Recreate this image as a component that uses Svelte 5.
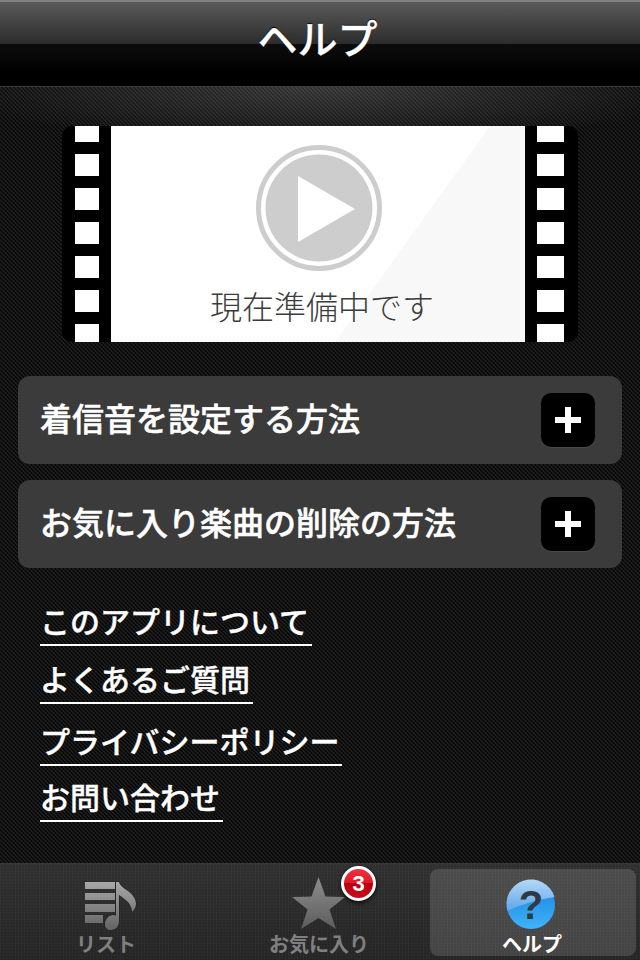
<script>
	const holes = [0, 1, 2, 3, 4, 5, 6];
	const rows = ["着信音を設定する方法", "お気に入り楽曲の削除の方法"];
	const links = [
		{ label: "このアプリについて", cls: "l1" },
		{ label: "よくあるご質問", cls: "l2" },
		{ label: "プライバシーポリシー", cls: "l3" },
		{ label: "お問い合わせ", cls: "l4" },
	];
</script>

<div class="page">
	<header class="top">
		<h1>ヘルプ</h1>
	</header>

	<main class="content">
		<div class="film">
			<div class="strip left">
				{#each holes as h}<span class="hole"></span>{/each}
			</div>
			<div class="screen">
				<svg class="play" width="126" height="126" viewBox="0 0 126 126">
					<circle cx="63" cy="63" r="60.5" fill="none" stroke="#cdcdcd" stroke-width="5" />
					<circle cx="63" cy="63" r="53.5" fill="#cdcdcd" />
					<polygon points="42,31 42,97 99,64" fill="#fff" />
				</svg>
				<p>現在準備中です</p>
			</div>
			<div class="strip right">
				{#each holes as h}<span class="hole"></span>{/each}
			</div>
		</div>

		<div class="rows">
			{#each rows as row}
				<div class="row">
					<span>{row}</span>
					<button class="plus" aria-label="開く">
						<svg width="26" height="26" viewBox="0 0 26 26">
							<path d="M10 0h6v10h10v6H16v10h-6V16H0v-6h10z" fill="#fff" />
						</svg>
					</button>
				</div>
			{/each}
		</div>

		<nav class="links">
			{#each links as link}
				<a href="#top" class={link.cls}>{link.label}</a>
			{/each}
		</nav>
	</main>

	<footer class="tabs">
		<div class="tab">
			<svg class="icon" width="60" height="52" viewBox="0 0 60 52">
				<defs>
					<linearGradient id="g-list" gradientUnits="userSpaceOnUse" x1="0" y1="2" x2="0" y2="48">
						<stop offset="0" stop-color="#a8a8a8" />
						<stop offset="1" stop-color="#666" />
					</linearGradient>
				</defs>
				<path fill="url(#g-list)" d="M9 2h30v7H9zM9 13h30v7H9zM9 24h30v8H9zM9 35h18v8H9z" />
				<path
					fill="url(#g-list)"
					stroke="#1e1e1e"
					stroke-width="1"
					paint-order="stroke"
					d="M40 2h3c1 4 5 6 9 9 5 4 8 8 8 13 0 3-2 6-4 8 0-3-1-6-4-10-3-3-6-5-9-7v26c0 5-3 9-8 9-4 0-6-2-6-6 0-5 4-9 8-9 1.500 0 2.500.3 3 .8z"
				/>
			</svg>
			<span>リスト</span>
		</div>
		<div class="tab">
			<div class="star-wrap">
				<svg class="icon" width="60" height="52" viewBox="0 0 60 52">
					<defs>
						<linearGradient id="g-star" x1="0" y1="0" x2="0" y2="1">
							<stop offset="0" stop-color="#8e8e8e" />
							<stop offset="1" stop-color="#5c5c5c" />
						</linearGradient>
					</defs>
					<polygon
						fill="url(#g-star)"
						points="29.500,-3 36.500,16.500 56,17 40.500,29.500 47,49 29.500,38 12,49 18.500,29.500 3,17 22.500,16.500"
					/>
				</svg>
				<span class="badge">3</span>
			</div>
			<span>お気に入り</span>
		</div>
		<div class="tab active">
			<svg class="icon" width="60" height="52" viewBox="0 0 60 52">
				<defs>
					<linearGradient id="g-help" x1="0" y1="0" x2="0" y2="1">
						<stop offset="0" stop-color="#1c7fe0" />
						<stop offset="1" stop-color="#3db4f8" />
					</linearGradient>
					<linearGradient id="g-gloss" x1="0" y1="0" x2="0" y2="1">
						<stop offset="0" stop-color="#b4d8f6" />
						<stop offset="1" stop-color="#5da6ec" />
					</linearGradient>
				</defs>
				<circle cx="29" cy="25" r="24" fill="url(#g-help)" />
				<path d="M5.500 31A24 24 0 0 1 52.500 17C39 19 19 24 5.500 31z" fill="url(#g-gloss)" />
				<text x="29" y="39" text-anchor="middle" class="q">?</text>
			</svg>
			<span>ヘルプ</span>
		</div>
	</footer>
</div>

<style>
	:global(body) {
		margin: 0;
		background: #000;
	}

	.page {
		width: 640px;
		height: 960px;
		display: flex;
		flex-direction: column;
		overflow: hidden;
		font-family: "Noto Sans CJK JP", "Liberation Sans", sans-serif;
		color: #fff;
	}

	.top {
		height: 86px;
		flex: none;
		box-sizing: border-box;
		border-top: 2px solid #808080;
		background: linear-gradient(#5a5a5a 0, #2c2c2c 42px, #0c0c0c 42px, #000 72px);
		text-align: center;
		padding-right: 5px;
	}

	h1 {
		margin: 0;
		font-size: 40px;
		font-weight: 500;
		line-height: 70px;
		-webkit-text-stroke: 0.3px #fff;
		text-shadow: 0 -1px 1px #000;
	}

	.content {
		flex: 1;
		display: flex;
		flex-direction: column;
		border-top: 1px solid #3c3c3c;
		padding: 39px 18px 0;
		background:
			radial-gradient(ellipse 380px 60px at 320px 0, rgba(255, 255, 255, 0.17), rgba(255, 255, 255, 0)) no-repeat,
			linear-gradient(45deg, #090909 33.3%, #1c1c1c 33.3%, #1c1c1c 50%, #090909 50%, #090909 83.3%, #1c1c1c 83.3%) 0 0 / 4px 4px;
	}

	.film {
		width: 516px;
		height: 216px;
		margin-left: 44px;
		flex: none;
		display: flex;
		background: #000;
		border-radius: 10px;
	}

	.strip {
		flex: none;
		display: flex;
		flex-direction: column;
		gap: 12px;
		height: 216px;
		overflow: hidden;
		box-sizing: border-box;
	}

	.strip.left {
		width: 49px;
		padding-left: 13px;
	}

	.strip.right {
		width: 53px;
		padding-left: 12px;
	}

	.hole {
		display: block;
		flex: none;
		height: 22px;
		background: #fff;
	}

	.hole:first-child {
		margin-top: -6px;
	}

	.strip.left .hole {
		width: 24px;
	}

	.strip.right .hole {
		width: 27px;
	}

	.screen {
		position: relative;
		flex: 1;
		display: flex;
		flex-direction: column;
		align-items: center;
		background: #fff;
		overflow: hidden;
	}

	.screen::before {
		content: "";
		position: absolute;
		inset: 0;
		background: #f8f8f8;
		clip-path: polygon(379px 0, 100% 0, 100% 100%, 224px 100%);
	}

	.play {
		position: relative;
		margin-top: 19px;
		margin-left: 1px;
	}

	.screen p {
		position: relative;
		margin: 12px 0 0 8px;
		font-size: 32px;
		line-height: 44px;
		font-weight: 300;
		color: #3c3c3c;
	}

	.rows {
		display: flex;
		flex-direction: column;
		gap: 16px;
		margin-top: 34px;
	}

	.row {
		height: 88px;
		box-sizing: border-box;
		display: flex;
		align-items: center;
		justify-content: space-between;
		padding: 0 27px 0 22px;
		border-radius: 12px;
		background: #3b3b3b;
		font-size: 32px;
		font-weight: 500;
		-webkit-text-stroke: 0.5px #fff;
	}

	.row span {
		margin-bottom: 6px;
	}

	.plus {
		width: 54px;
		height: 54px;
		padding: 0;
		display: flex;
		align-items: center;
		justify-content: center;
		background: #000;
		border: 0;
		border-radius: 10px;
		box-shadow: 0 1px 0 #4a4a4a;
	}

	.plus svg {
		display: block;
	}

	.links {
		display: flex;
		flex-direction: column;
		align-items: flex-start;
		margin: 0 0 0 22px;
	}

	.links a {
		display: block;
		color: #fff;
		text-decoration: none;
		font-size: 30px;
		font-weight: 500;
		-webkit-text-stroke: 0.4px #fff;
		line-height: 40px;
		padding: 0 3px 4px 0;
		border-bottom: 2px solid #fff;
	}

	.l1 {
		margin-top: 32px;
	}

	.l2 {
		margin-top: 12px;
	}

	.l3 {
		margin-top: 16px;
	}

	.l4 {
		margin-top: 10px;
	}

	.tabs {
		height: 97px;
		flex: none;
		box-sizing: border-box;
		display: grid;
		grid-template-columns: 212px 214px 210px;
		padding: 5px 4px 4px 0;
		border-top: 1px solid #3a3a3a;
		background:
			repeating-linear-gradient(90deg, rgba(255, 255, 255, 0.025) 0, rgba(255, 255, 255, 0.025) 1px, transparent 1px, transparent 3px),
			repeating-linear-gradient(0deg, rgba(0, 0, 0, 0.07) 0, rgba(0, 0, 0, 0.07) 1px, transparent 1px, transparent 3px),
			linear-gradient(#313131, #272727);
	}

	.tab {
		display: flex;
		flex-direction: column;
		align-items: center;
		justify-content: flex-end;
		border-radius: 8px;
		font-size: 20px;
		font-weight: 700;
		line-height: 24px;
		color: #808080;
	}

	.tab.active {
		margin-left: 4px;
		padding-right: 2px;
		color: #fff;
		background: rgba(255, 255, 255, 0.14);
	}

	.icon {
		display: block;
		overflow: visible;
	}

	.star-wrap {
		position: relative;
	}

	.badge {
		position: absolute;
		left: 52px;
		top: -14px;
		width: 29px;
		height: 29px;
		border: 3.5px solid #fff;
		border-radius: 50%;
		background: linear-gradient(#f03040 0, #e01828 50%, #b80012 50%, #c80a1c 100%);
		box-shadow: 0 2px 4px rgba(0, 0, 0, 0.75);
		font-family: "Liberation Sans", sans-serif;
		font-size: 22px;
		font-weight: 700;
		line-height: 29px;
		text-align: center;
		color: #fff;
	}

	.q {
		font-family: "Liberation Sans", sans-serif;
		font-size: 40px;
		font-weight: 700;
		fill: #2f3a44;
	}
</style>
